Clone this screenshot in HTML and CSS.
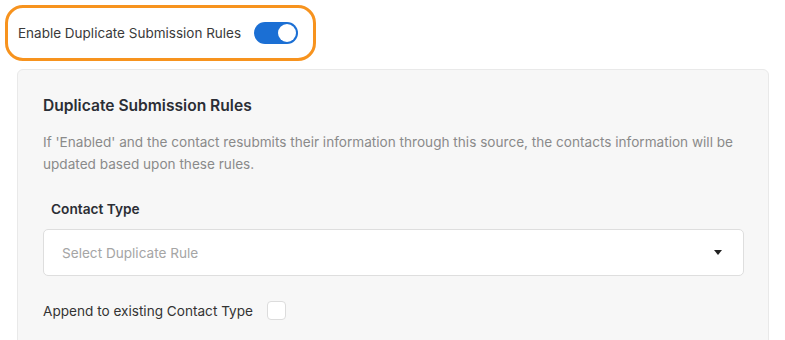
FILE: index.html
```html
<!doctype html>
<html lang="en">
	<head>
		<meta charset="UTF-8">
		<title>Duplicate Submission Rules</title>
		<link rel="stylesheet" href="styles.css">
	</head>
	<body>
		<div class="enable-row">
			<span class="enable-label">Enable Duplicate Submission Rules</span>
			<span class="toggle"><span class="knob"></span></span>
		</div>
		<div class="rules-card">
			<h3 class="rules-title">Duplicate Submission Rules</h3>
			<p class="rules-desc">If 'Enabled' and the contact resubmits their information through this source, the contacts information will be updated based upon these rules.</p>
			<label class="field-label">Contact Type</label>
			<div class="select">
				<span class="placeholder">Select Duplicate Rule</span>
				<span class="caret"></span>
			</div>
			<div class="append-row">
				<span>Append to existing Contact Type</span>
				<span class="checkbox"></span>
			</div>
		</div>
	</body>
</html>
```

FILE: styles.css
```css
body{
	margin: 0;
	font-family: Inter, "Liberation Sans", sans-serif;
	background-color: #fff;
	color: #333;
}
.enable-row{
	display: flex;
	align-items: center;
	gap: 13px;
	box-sizing: border-box;
	width: 311px;
	height: 56px;
	margin: 5px 0 0 5px;
	padding-left: 10px;
	border: 3px solid #f7931e;
	border-radius: 18px;
}
.enable-label{
	font-size: 13.5px;
	color: #3a3a3a;
}
.toggle{
	position: relative;
	width: 44px;
	height: 22px;
	border-radius: 11px;
	background-color: #1b6fd4;
}
.knob{
	position: absolute;
	top: 2px;
	right: 2px;
	width: 18px;
	height: 18px;
	border-radius: 50%;
	background-color: #fff;
}
.rules-card{
	box-sizing: border-box;
	width: 752px;
	height: 290px;
	margin: 8px 0 0 17px;
	padding: 25px 24px 0 25px;
	background-color: #f7f7f7;
	border: 1px solid #e9e9e9;
	border-radius: 6px;
}
.rules-title{
	margin: 0;
	font-size: 15.6px;
	line-height: 22px;
	font-weight: 600;
	color: #2b2e35;
}
.rules-desc{
	margin: 14px 0 0;
	font-size: 13.6px;
	line-height: 22px;
	color: #8a8a8a;
}
.field-label{
	display: block;
	margin: 24px 0 0 8px;
	font-size: 13.7px;
	line-height: 20px;
	font-weight: 600;
	color: #2b2e35;
}
.select{
	display: flex;
	align-items: center;
	justify-content: space-between;
	box-sizing: border-box;
	height: 47px;
	margin-top: 10px;
	padding: 0 21px 0 18px;
	background-color: #fff;
	border: 1px solid #dedede;
	border-radius: 5px;
}
.placeholder{
	font-size: 13.6px;
	color: #a5a5a5;
}
.caret{
	width: 0;
	height: 0;
	border-left: 4px solid transparent;
	border-right: 4px solid transparent;
	border-top: 5px solid #222;
}
.append-row{
	display: flex;
	align-items: center;
	gap: 14px;
	margin-top: 25px;
	font-size: 13.6px;
	color: #333;
}
.checkbox{
	box-sizing: border-box;
	width: 19px;
	height: 19px;
	background-color: #fff;
	border: 1px solid #dcdcdc;
	border-radius: 4px;
}
```
